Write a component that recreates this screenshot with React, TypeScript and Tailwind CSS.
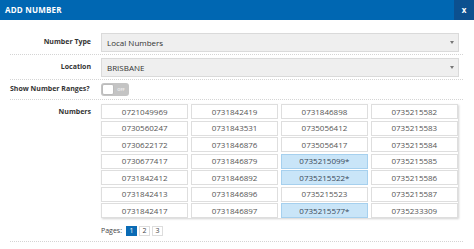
const numbers = [
  ['0721049969', '0731842419', '0731846898', '0735215582'],
  ['0730560247', '0731843531', '0735056412', '0735215583'],
  ['0730622172', '0731846876', '0735056417', '0735215584'],
  ['0730677417', '0731846879', '0735215099*', '0735215585'],
  ['0731842412', '0731846892', '0735215522*', '0735215586'],
  ['0731842413', '0731846896', '0735215523', '0735215587'],
  ['0731842417', '0731846897', '0735215577*', '0735233309'],
]

const Select = ({ value }: { value: string }) => (
  <div className="flex-1 h-[19px] flex items-center justify-between bg-[#efefef] border border-[#dadada] pl-[5px] pr-[4px] text-[8px] text-[#333]">
    <span>{value}</span>
    <span className="w-0 h-0 border-l-[2.5px] border-r-[2.5px] border-t-[3px] border-l-transparent border-r-transparent border-t-[#777]" />
  </div>
)

export default function App() {
  return (
    <div className="w-[474px] h-[249px] bg-white overflow-hidden" style={{ fontFamily: '"Open Sans", "Liberation Sans", sans-serif' }}>
      {/* Header */}
      <div className="h-[20px] bg-[#0067b2] flex items-center justify-between">
        <span className="pl-[5px] text-[8px] font-bold text-white tracking-[0.2px]">ADD NUMBER</span>
        <span className="w-[20px] h-full bg-[#0c508f] flex items-center justify-center text-[8px] font-bold text-white">x</span>
      </div>

      <div className="ml-[10px] w-[453px] pt-[10px]">
        {/* Number Type */}
        <div className="flex items-center pt-[3px] pb-[2px] border-b border-dotted border-[#d4d4d4]">
          <label className="w-[91px] pr-[10px] text-right text-[7px] font-bold text-[#333]">Number Type</label>
          <div className="w-[358px] flex"><Select value="Local Numbers" /></div>
        </div>

        {/* Location */}
        <div className="flex items-center pt-[3px] pb-[2px] border-b border-dotted border-[#d4d4d4]">
          <label className="w-[91px] pr-[10px] text-right text-[7px] font-bold text-[#333]">Location</label>
          <div className="w-[358px] flex"><Select value="BRISBANE" /></div>
        </div>

        {/* Show ranges */}
        <div className="flex items-center pt-[3px] pb-[3px] border-b border-dotted border-[#d4d4d4]">
          <label className="w-[91px] text-left text-[7px] font-bold text-[#333] whitespace-nowrap">Show Number Ranges?</label>
          <div className="w-[28px] h-[13px] bg-[#c4c4c4] rounded-[3px] flex items-center p-[1px]">
            <span className="w-[12px] h-[11px] bg-white rounded-[2px] border border-[#bbb]" />
            <span className="flex-1 text-center text-[4px] font-bold text-[#eee] leading-none">OFF</span>
          </div>
        </div>

        {/* Numbers */}
        <div className="flex items-start pt-[4px] pb-[4px] border-b border-dotted border-[#d4d4d4]">
          <label className="w-[91px] pr-[10px] pt-[3px] text-right text-[7px] font-bold text-[#333]">Numbers</label>
          <div className="w-[358px]">
            <div className="w-[357px] grid grid-cols-4 gap-x-[2.5px] gap-y-[1.5px] shadow-[1px_1px_2px_rgba(0,0,0,0.18)]">
              {numbers.flat().map((n) => {
                const picked = n.endsWith('*')
                return (
                  <div
                    key={n}
                    className={`h-[15px] flex items-center justify-center text-[8px] border ${
                      picked ? 'bg-[#c9e5f8] border-[#a6d0ee] text-[#3a4a58]' : 'bg-white border-[#dedede] text-[#555]'
                    }`}
                  >
                    {n}
                  </div>
                )
              })}
            </div>
            <div className="flex items-center gap-[2px] mt-[8px] text-[7px] text-[#444]">
              <span className="mr-[2px]">Pages:</span>
              <span className="w-[11px] h-[10px] flex items-center justify-center bg-[#0a6bb5] text-white">1</span>
              <span className="w-[11px] h-[10px] flex items-center justify-center border border-[#ddd] bg-white">2</span>
              <span className="w-[11px] h-[10px] flex items-center justify-center border border-[#ddd] bg-white">3</span>
            </div>
          </div>
        </div>
      </div>
    </div>
  )
}
